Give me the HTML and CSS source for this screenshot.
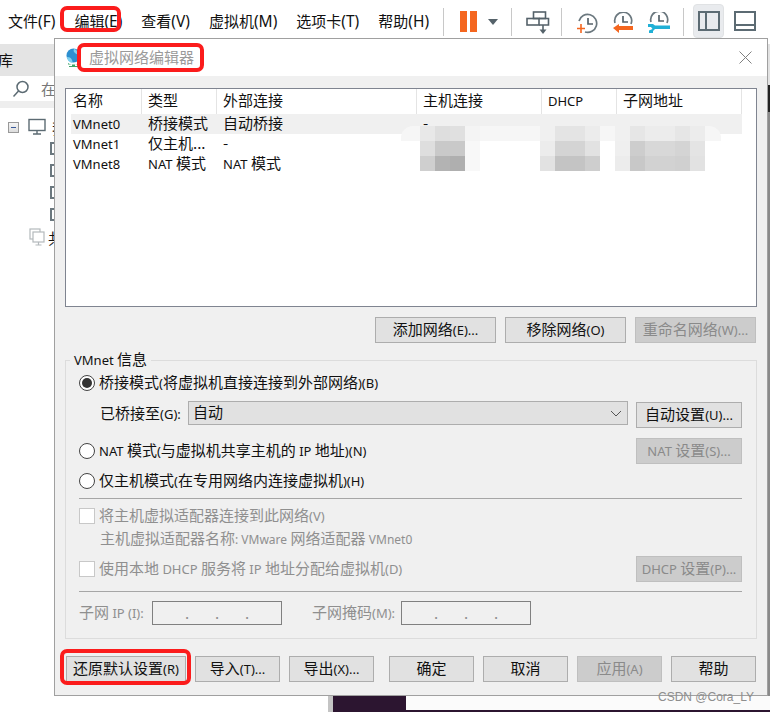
FILE: index.html
```html
<!DOCTYPE html>
<html lang="zh-CN">
<head>
  <meta charset="UTF-8" />
  <title>虚拟网络编辑器</title>
  <link rel="stylesheet" href="styles.css">
</head>
<body>
  <div class="app">
    <!-- barra superior -->
    <header class="topbar">
      <nav class="menu">
        <span>文件<span class="la">(F)</span></span>
        <span>编辑<span class="la">(E)</span></span>
        <span>查看<span class="la">(V)</span></span>
        <span>虚拟机<span class="la">(M)</span></span>
        <span>选项卡<span class="la">(T)</span></span>
        <span>帮助<span class="la">(H)</span></span>
      </nav>
      <div class="tools">
        <i class="sep sep-first"></i>
        <svg class="tool-pause" width="17" height="22" viewBox="0 0 17 22"><rect width="7" height="21" y="0" fill="#f4661f"/><rect x="10" width="7" height="21" fill="#f4661f"/></svg>
        <svg class="tool-caret" width="10" height="6" viewBox="0 0 10 6"><path d="M0 0h10L5 6z" fill="#55626a"/></svg>
        <i class="sep sep-b"></i>
        <svg class="tool-net" width="24" height="24" viewBox="0 0 24 24" fill="none" stroke="#55626a" stroke-width="1.6"><rect x="7.5" y="1" width="12" height="6.5"/><rect x="1" y="7.5" width="12" height="6.5"/><path d="M13 7.5h9.5V14H13"/><path d="M17 14v5" /><path d="M13.5 18.5h7L17 23z" fill="#55626a" stroke="none"/></svg>
        <i class="sep sep-c"></i>
        <svg class="tool-clock" width="22" height="22" viewBox="0 0 22 22" fill="none"><path d="M3 9a9 9 0 1 1 6 11" stroke="#6b787f" stroke-width="1.7"/><path d="M12 6v6h5" stroke="#55626a" stroke-width="1.7"/><path d="M5 12v9M1 16.5h8" stroke="#f4661f" stroke-width="1.6"/></svg>
        <svg class="tool-clock" width="22" height="22" viewBox="0 0 22 22" fill="none"><path d="M3 11a8.500 8.500 0 1 1 16 1" stroke="#6b787f" stroke-width="1.7"/><path d="M11 4v6h5" stroke="#55626a" stroke-width="1.7"/><path d="M21 14v4H7v3l-6-5 6-4v2z" fill="#f4661f"/></svg>
        <svg class="tool-clock" width="22" height="22" viewBox="0 0 22 22" fill="none"><path d="M3 10a8.500 8.500 0 1 1 16 1" stroke="#6b787f" stroke-width="1.7"/><path d="M11 3v6h5" stroke="#55626a" stroke-width="1.7"/><path d="M0 12h5l2 1.500h15V17H7l-2 2v2H1v-2.500L4.500 17 3 15H0z" fill="#20b0d6"/></svg>
        <i class="sep sep-d"></i>
        <span class="layout-on">
          <svg width="22" height="20" viewBox="0 0 22 20" fill="none" stroke="#5c6b73" stroke-width="2"><rect x="1" y="1" width="20" height="18"/><path d="M8 1v18"/></svg>
        </span>
        <svg class="layout-off" width="22" height="20" viewBox="0 0 22 20" fill="none" stroke="#5c6b73" stroke-width="2"><rect x="1" y="1" width="20" height="18"/><path d="M1 14h20"/></svg>
      </div>
    </header>

    <div class="workspace">
      <aside class="sidebar">
        <div class="lib-title">库</div>
        <div class="lib-search">
          <svg width="18" height="18" viewBox="0 0 18 18" fill="none" stroke="#5c6b73" stroke-width="1.5"><circle cx="10.500" cy="7" r="5.500"/><path d="M6.500 11 1.500 16.500"/></svg>
          <span>在</span>
        </div>
        <div class="tree">
          <div class="tree-root">
            <span class="minus"></span>
            <svg width="18" height="18" viewBox="0 0 18 18" fill="none" stroke="#5c6b73" stroke-width="1.400"><rect x="1" y="1.500" width="16" height="11"/><path d="M9 12.500v3M5 16h8"/></svg>
            <span class="tree-name">我的计算机</span>
          </div>
          <div class="tree-vm"><i></i></div>
          <div class="tree-vm"><i></i></div>
          <div class="tree-vm"><i></i></div>
          <div class="tree-vm"><i></i></div>
          <div class="tree-shared">
            <svg width="16" height="18" viewBox="0 0 16 18" fill="none" stroke="#b4b9bc" stroke-width="1.200"><rect x="1" y="1" width="10" height="10"/><rect x="4" y="4" width="11" height="10" fill="#fff"/><path d="M9.500 14v3M6.500 17h6"/></svg>
            <span class="tree-name">共享虚拟机</span>
          </div>
        </div>
      </aside>
      <main class="console">
        <div class="tabstrip"></div>
        <div class="console-area"></div>
        <div class="console-foot"><div class="console-white"></div></div>
      </main>
    </div>

    <!-- dialogo -->
    <section class="dialog">
      <div class="dialog-title">
        <svg width="16" height="20" viewBox="0 0 16 20"><circle cx="7.500" cy="7.500" r="7" fill="#2d8fd0"/><path d="M1 9c3 0 4 1 5 3s0 3 1 3c-3 0-6-3-6-6zM8 1c2 0 2 2 4 2s2 2 1 3-3 0-4-1-2-2-1-4z" fill="#7fd0f0"/><path d="M2 15c3 2 8 2 11 0v1.500H9V18h3v1H3v-1h3v-1.500H2z" fill="#3fa66a"/></svg>
        <span class="dialog-name">虚拟网络编辑器</span>
        <svg class="dialog-close" width="13" height="13" viewBox="0 0 13 13" fill="none" stroke="#808080"><path d="M.5.5l12 12M12.500.5l-12 12"/></svg>
      </div>

      <div class="dialog-body">
        <div class="net-list">
          <div class="net-row net-head">
            <span>名称</span><span>类型</span><span>外部连接</span><span>主机连接</span><span><span class="la">DHCP</span></span><span>子网地址</span>
          </div>
          <div class="net-row sel">
            <span class="la">VMnet0</span><span>桥接模式</span><span>自动桥接</span><span>-</span><span></span><span></span>
          </div>
          <div class="net-row">
            <span class="la">VMnet1</span><span>仅主机...</span><span>-</span><span></span><span></span><span></span>
          </div>
          <div class="net-row">
            <span class="la">VMnet8</span><span><span class="la">NAT</span> 模式</span><span><span class="la">NAT</span> 模式</span><span></span><span></span><span></span>
          </div>
          <!-- mosaico que tapa las direcciones -->
          <div class="smear"></div>
          <div class="mosaic mosaic-host">
            <i class="s-e8"></i><i class="s-de"></i><i class="s-e0"></i><i class="s-f4"></i>
            <i class="s-de"></i><i class="s-c9"></i><i class="s-c9"></i><i class="s-f8"></i>
            <i class="s-cf"></i><i class="s-b3"></i><i class="s-af"></i><i class="s-f8"></i>
          </div>
          <div class="mosaic mosaic-dhcp">
            <i class="s-f0"></i><i class="s-e4"></i><i class="s-e4"></i><i class="s-ec"></i>
            <i class="s-ec"></i><i class="s-d4"></i><i class="s-d4"></i><i class="s-e2"></i>
            <i class="s-e2"></i><i class="s-c4"></i><i class="s-c4"></i><i class="s-ce"></i>
          </div>
          <div class="mosaic mosaic-subnet">
            <i class="s-f0"></i><i class="s-e6"></i><i class="s-ec"></i><i class="s-ec"></i><i class="s-e6"></i><i class="s-ec"></i>
            <i class="s-ef"></i><i class="s-cd"></i><i class="s-d8"></i><i class="s-d8"></i><i class="s-d4"></i><i class="s-e4"></i>
            <i class="s-ec"></i><i class="s-c8"></i><i class="s-d2"></i><i class="s-d2"></i><i class="s-d0"></i><i class="s-e2"></i>
          </div>
        </div>

        <div class="list-actions">
          <button class="btn btn-wide">添加网络<span class="la">(E)...</span></button>
          <button class="btn btn-wide">移除网络<span class="la">(O)</span></button>
          <button class="btn btn-wide off">重命名网络<span class="la">(W)...</span></button>
        </div>

        <fieldset class="vmnet">
          <legend><span class="la">VMnet</span> 信息</legend>

          <div class="opt opt-bridge">
            <span class="radio on"></span>
            <span class="opt-text">桥接模式<span class="la">(</span>将虚拟机直接连接到外部网络<span class="la">)(B)</span></span>
          </div>
          <div class="bridge-to">
            <span class="bridge-label">已桥接至<span class="la">(G):</span></span>
            <div class="select">
              <span class="opt-text">自动</span>
              <svg width="12" height="7" viewBox="0 0 12 7" fill="none" stroke="#555"><path d="M1 1l5 5 5-5"/></svg>
            </div>
            <button class="btn btn-side">自动设置<span class="la">(U)...</span></button>
          </div>
          <div class="opt opt-nat">
            <span class="radio"></span>
            <span class="opt-text"><span class="la">NAT</span> 模式<span class="la">(</span>与虚拟机共享主机的 <span class="la">IP</span> 地址<span class="la">)(N)</span></span>
            <button class="btn btn-side off push">
              <span class="la">NAT</span> 设置<span class="la">(S)...</span>
            </button>
          </div>
          <div class="opt opt-host">
            <span class="radio"></span>
            <span class="opt-text">仅主机模式<span class="la">(</span>在专用网络内连接虚拟机<span class="la">)(H)</span></span>
          </div>

          <hr class="rule rule-a">

          <div class="opt opt-check dim">
            <span class="check"></span>
            <span class="opt-text">将主机虚拟适配器连接到此网络<span class="la">(V)</span></span>
          </div>
          <div class="adapter dim">主机虚拟适配器名称<span class="la">: VMware</span> 网络适配器 <span class="la">VMnet0</span></div>
          <div class="opt opt-dhcp dim">
            <span class="check"></span>
            <span class="opt-text">使用本地 <span class="la">DHCP</span> 服务将 <span class="la">IP</span> 地址分配给虚拟机<span class="la">(D)</span></span>
            <button class="btn btn-side off push"><span class="la">DHCP</span> 设置<span class="la">(P)...</span></button>
          </div>

          <hr class="rule rule-b">

          <div class="subnet dim">
            <span class="subnet-ip opt-text">子网 <span class="la">IP (I):</span></span>
            <div class="ip-box"><b>.</b><b>.</b><b>.</b></div>
            <span class="subnet-mask opt-text">子网掩码<span class="la">(M):</span></span>
            <div class="ip-box"><b>.</b><b>.</b><b>.</b></div>
          </div>
        </fieldset>

        <div class="dialog-foot">
          <button class="btn btn-restore">还原默认设置<span class="la">(R)</span></button>
          <button class="btn btn-foot">导入<span class="la">(T)...</span></button>
          <button class="btn btn-foot">导出<span class="la">(X)...</span></button>
          <button class="btn btn-foot btn-ok">确定</button>
          <button class="btn btn-foot">取消</button>
          <button class="btn btn-foot off">应用<span class="la">(A)</span></button>
          <button class="btn btn-foot">帮助</button>
        </div>
      </div>
    </section>

    <!-- marcas rojas -->
    <div class="mark mark-menu"></div>
    <div class="mark mark-title"></div>
    <div class="mark mark-restore"></div>
    <div class="watermark">CSDN @Cora_LY</div>
  </div>
</body>
</html>
```

FILE: styles.css
```css
* { box-sizing: border-box; }

body {
  margin: 0;
  font-family: "Noto Sans CJK SC", "Noto Sans", sans-serif;
  font-size: 15px;
  color: #111;
  background: #fff;
}

.la {
  font-family: "Noto Sans", "Liberation Sans", sans-serif;
  font-size: 13px;
}

.app {
  position: relative;
  width: 770px;
  height: 712px;
  overflow: hidden;
  display: flex;
  flex-direction: column;
}

/* barra superior */
.topbar {
  height: 44px;
  display: flex;
  align-items: flex-start;
  flex: none;
}

.menu {
  display: flex;
  gap: 19px;
  margin-left: 8px;
  padding-top: 10px;
  line-height: 22px;
  white-space: nowrap;
}

.menu .la { font-size: 15.5px; }

.tools {
  position: absolute;
  left: 443px;
  top: 0;
  display: flex;
  align-items: flex-start;
}

.sep {
  display: block;
  width: 1px;
  height: 28px;
  margin-top: 8px;
  background: #c8c8c8;
}

.tool-pause { margin: 11px 0 0 16px; }
.tool-caret { margin: 19px 0 0 11px; }
.sep-b { margin-left: 13px; }
.tool-net { margin: 11px 0 0 14px; }
.sep-c { margin-left: 11px; }
.tool-clock { margin: 12px 0 0 14px; }
.sep-d { margin-left: 13px; }

.layout-on {
  display: flex;
  align-items: center;
  justify-content: center;
  width: 31px;
  height: 34px;
  margin: 4px 0 0 9px;
  background: #e9ebee;
  border-radius: 4px;
  border: 1px solid #e0e2e4;
}

.layout-off { margin: 11px 0 0 10px; }

/* fondo detras del dialogo */
.workspace {
  flex: 1;
  display: flex;
  min-height: 0;
}

.sidebar {
  width: 328px;
  flex: none;
}

.lib-title {
  height: 32px;
  background: #e4e4e4;
  line-height: 32px;
  margin-left: -2px;
  padding-left: 0;
}

.lib-search {
  height: 25px;
  display: flex;
  align-items: center;
  gap: 11px;
  padding-left: 12px;
  color: #777;
}

.tree {
  border-top: 7px solid #eeeeee;
  padding-top: 10px;
}

.tree-root {
  display: flex;
  align-items: center;
  height: 18px;
  padding-left: 8px;
  gap: 9px;
}

.minus {
  position: relative;
  width: 11px;
  height: 11px;
  border: 1px solid #999;
  background: linear-gradient(#f4f4f4, #ddd);
}

.minus::after {
  content: "";
  position: absolute;
  left: 2px;
  top: 4px;
  width: 5px;
  height: 1px;
  background: #3a5a9a;
}

.tree-name { margin-left: -3px; white-space: nowrap; }

.tree-vm {
  height: 22px;
  padding: 6px 0 0 50px;
}

.tree-vm i {
  display: block;
  width: 14px;
  height: 13px;
  border: 2px solid #6b787f;
}

.tree-shared {
  display: flex;
  align-items: center;
  gap: 6px;
  height: 18px;
  margin-top: 4px;
  padding-left: 29px;
}

.console {
  flex: 1;
  display: flex;
  flex-direction: column;
  border-left: 5px solid #c4c4c4;
}

.tabstrip {
  height: 41px;
  background: #e2e2e2;
}

.console-area {
  flex: 1;
  background: linear-gradient(#222 27px, #8a8a8a 27px);
}

.console-foot {
  height: 16px;
  padding-left: 73px;
  padding-bottom: 2px;
  background: #2c1530;
}

.console-white {
  height: 14px;
  background: #fbfbfb;
}

/* dialogo */
.dialog {
  position: absolute;
  left: 54px;
  top: 38px;
  width: 714px;
  height: 658px;
  border: 1px solid #a0a0a0;
  background: #f0f0f0;
  display: flex;
  flex-direction: column;
}

.dialog-title {
  height: 37px;
  flex: none;
  background: #fff;
  display: flex;
  align-items: center;
  padding: 0 15px 0 11px;
}

.dialog-name {
  margin-left: 7px;
  padding-bottom: 2px;
  color: #9a9a9a;
}

.dialog-close { margin-left: auto; }

.dialog-body {
  flex: 1;
  padding: 12px 10px 0 10px;
}

.net-list {
  position: relative;
  height: 219px;
  border: 1px solid #7f8490;
  background: #fff;
}

.net-row {
  display: grid;
  grid-template-columns: 71px 75px 200px 125px 75px 125px;
  margin-left: 5px;
  width: 671px;
  height: 20px;
  line-height: 18px;
  white-space: nowrap;
}

.net-row > span { padding-left: 6px; }
.net-row > span:first-child { padding-left: 2px; }
.net-row > .la:first-child { padding-top: 1px; line-height: 19px; }

.net-head {
  height: 25px;
  line-height: 21px;
}

.net-head > span { border-right: 1px solid #e4e4e4; }
.sel { background: #f0f0f0; }

.smear {
  position: absolute;
  left: 335px;
  top: 37px;
  width: 320px;
  height: 15px;
  background: #f6f6f6;
  border-radius: 12px 12px 0 0;
}

.mosaic {
  position: absolute;
  top: 37px;
  display: grid;
  grid-auto-rows: 15px;
}

.mosaic-host { left: 354px; grid-template-columns: repeat(4, 15px); }
.mosaic-dhcp { left: 474px; grid-template-columns: repeat(4, 15px); }
.mosaic-subnet { left: 549px; grid-template-columns: repeat(6, 15px); }

.s-af { background: #afafaf; }
.s-b3 { background: #b3b3b3; }
.s-c4 { background: #c4c4c4; }
.s-c8 { background: #c8c8c8; }
.s-c9 { background: #c9c9c9; }
.s-cd { background: #cdcdcd; }
.s-ce { background: #cecece; }
.s-cf { background: #cfcfcf; }
.s-d0 { background: #d0d0d0; }
.s-d2 { background: #d2d2d2; }
.s-d4 { background: #d4d4d4; }
.s-d8 { background: #d8d8d8; }
.s-de { background: #dedede; }
.s-e0 { background: #e0e0e0; }
.s-e2 { background: #e2e2e2; }
.s-e4 { background: #e4e4e4; }
.s-e6 { background: #e6e6e6; }
.s-e8 { background: #e8e8e8; }
.s-ec { background: #ececec; }
.s-ef { background: #efefef; }
.s-f0 { background: #f0f0f0; }
.s-f4 { background: #f4f4f4; }
.s-f8 { background: #f8f8f8; }

.btn {
  height: 26px;
  padding: 0 0 2px;
  border: 1px solid #adadad;
  background: #e1e1e1;
  color: #111;
  font: inherit;
  line-height: 20px;
  white-space: nowrap;
}

.btn.off {
  background: #cccccc;
  border-color: #bfbfbf;
  color: #8a8a8a;
}

.list-actions {
  display: flex;
  justify-content: flex-end;
  gap: 9px;
  margin-top: 10px;
  padding-right: 1px;
}

.btn-wide { width: 121px; }
.btn-side { width: 106px; flex: none; }

.vmnet {
  margin: 8px 0 0;
  min-width: 0;
  height: 288px;
  padding: 0 14px 0 13px;
  border: 1px solid #dcdcdc;
}

.vmnet legend {
  padding: 0 4px;
  margin-left: -9px;
  height: 18px;
  line-height: 16px;
}

.opt {
  display: flex;
  align-items: center;
  height: 20px;
  white-space: nowrap;
}

.opt-text { padding-bottom: 4px; }

.opt-bridge { margin-top: 4px; }
.opt-nat { margin-top: 10px; height: 26px; }
.opt-host { margin-top: 7px; }
.opt-check { margin-top: 7px; }
.opt-dhcp { margin-top: 7px; height: 26px; }
.push { margin-left: auto; }

.radio {
  position: relative;
  width: 16px;
  height: 16px;
  margin-right: 4px;
  flex: none;
  border: 1px solid #444;
  border-radius: 50%;
  background: #fff;
}

.radio.on::after {
  content: "";
  position: absolute;
  left: 2px;
  top: 2px;
  width: 10px;
  height: 10px;
  border-radius: 50%;
  background: #333;
}

.check {
  width: 16px;
  height: 16px;
  margin-right: 4px;
  flex: none;
  border: 1px solid #c8c8c8;
  background: #fff;
}

.bridge-to {
  display: flex;
  align-items: flex-start;
  height: 27px;
  margin-top: 8px;
  padding-left: 21px;
}

.bridge-label {
  width: 88px;
  flex: none;
  line-height: 24px;
  white-space: nowrap;
}

.select {
  flex: 1;
  height: 24px;
  margin-right: 8px;
  display: flex;
  align-items: center;
  justify-content: space-between;
  padding: 0 5px 0 4px;
  border: 1px solid #adadad;
  background: #e1e1e1;
}

.bridge-to .btn-side { margin-top: 1px; }

.rule {
  height: 1px;
  margin: 0;
  border: 0;
  background: #a6a6a6;
}

.rule-a { margin-top: 7px; }
.rule-b { margin-top: 9px; }

.dim { color: #8f8f8f; }

.adapter {
  height: 20px;
  margin-top: 3px;
  padding-left: 21px;
  line-height: 18px;
  white-space: nowrap;
}

.adapter .la { font-size: 12px; }

.subnet {
  display: flex;
  align-items: center;
  height: 24px;
  margin-top: 9px;
  white-space: nowrap;
}

.subnet-ip { width: 73px; flex: none; }
.subnet-mask { width: 89px; flex: none; margin-left: 30px; }

.ip-box {
  width: 130px;
  height: 24px;
  flex: none;
  display: flex;
  justify-content: space-around;
  padding: 0 19px;
  border: 1px solid #808080;
  background: #f0f0f0;
  line-height: 21px;
}

.ip-box b { font-weight: normal; }

.dialog-foot {
  display: flex;
  gap: 9px;
  margin-top: 17px;
  padding-left: 1px;
}

.btn-restore { width: 120px; }
.btn-foot { width: 85px; }
.btn-ok { margin-left: 6px; }

/* marcas */
.mark {
  position: absolute;
  border: 4px solid #fb1c1c;
  border-radius: 7px;
}

.mark-menu { left: 60px; top: 6px; width: 61px; height: 26px; }
.mark-title { left: 77px; top: 43px; width: 127px; height: 29px; }
.mark-restore { left: 60px; top: 649px; width: 131px; height: 36px; }

.watermark {
  position: absolute;
  right: 16px;
  top: 690px;
  font-family: "Liberation Sans", sans-serif;
  font-size: 12px;
  line-height: 15px;
  color: #8e8e8e;
}
```
